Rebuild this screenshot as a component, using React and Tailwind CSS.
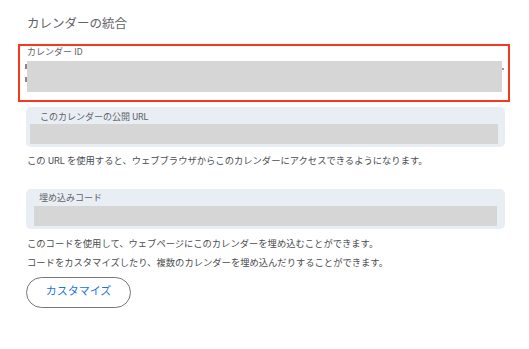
export default function App() {
  const font = "font-['Roboto','Noto_Sans_CJK_JP',sans-serif]";
  return (
    <div className={`w-[529px] h-[349px] bg-white overflow-hidden ${font} text-[#5f6368]`}>
      <div className="pt-[15px] pl-[27px] text-[12.5px] leading-[18px] text-[#5f6368]">カレンダーの統合</div>

      <div className="ml-[18px] mt-[11px] w-[492px] h-[58px] border-2 border-[#f4391e] pl-[5px] pr-[4px]">
        <div className="pl-[2px] text-[9px] leading-[12px] text-[#5f6368]">カレンダー ID</div>
        <div className="mt-[3px] flex">
          <div className="flex w-[2px] flex-col justify-start gap-[8px] pt-[3px]">
            <div className="h-[5px] w-[2px] bg-[#8a8a8a]" />
            <div className="h-[5px] w-[2px] bg-[#8a8a8a]" />
          </div>
          <div className="h-[31px] flex-1 bg-[#d6d6d6]" />
          <div className="w-[2px] pt-[7px]">
            <div className="h-[2px] w-[2px] bg-[#9a9a9a]" />
          </div>
        </div>
      </div>

      <div className="ml-[26px] mt-[5px] w-[479px] h-[40px] rounded-[5px] bg-[#e9edf4] pl-[4px] pr-[7px] pt-[4px]">
        <div className="pl-[10px] text-[9px] leading-[12px] text-[#5f6368]">このカレンダーの公開 URL</div>
        <div className="mt-[1px] h-[20px] bg-[#d6d6d6]" />
      </div>

      <div className="mt-[7px] pl-[27px] text-[9.3px] leading-[14px] text-[#4a4d51]">
        この URL を使用すると、ウェブブラウザからこのカレンダーにアクセスできるようになります。
      </div>

      <div className="ml-[26px] mt-[21px] w-[479px] h-[40px] rounded-[5px] bg-[#e9edf4] pl-[8px] pr-[8px] pt-[3px]">
        <div className="pl-[5px] text-[9px] leading-[12px] text-[#5f6368]">埋め込みコード</div>
        <div className="mt-[2px] h-[20px] bg-[#d6d6d6]" />
      </div>

      <div className="mt-[5px] pl-[27px] text-[9.3px] leading-[19px] text-[#4a4d51]">
        <div>このコードを使用して、ウェブページにこのカレンダーを埋め込むことができます。</div>
        <div>コードをカスタマイズしたり、複数のカレンダーを埋め込んだりすることができます。</div>
      </div>

      <div className="ml-[26px] mt-[5px] flex h-[31px] w-[105px] items-center justify-center rounded-full border border-[#747775] text-[11px] text-[#1a73e8]">
        カスタマイズ
      </div>
    </div>
  );
}
